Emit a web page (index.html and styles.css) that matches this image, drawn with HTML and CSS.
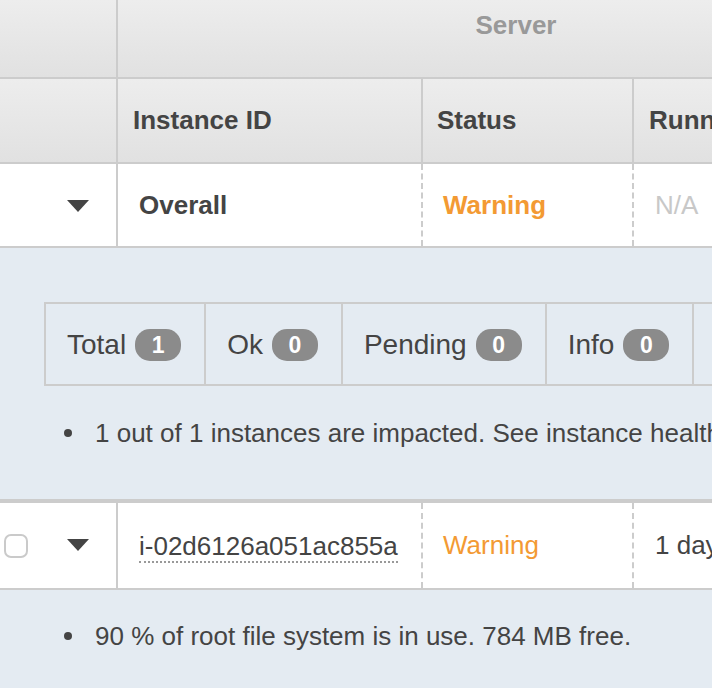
FILE: index.html
```html
<!DOCTYPE html>
<html>
<head>
<meta charset="utf-8">
<link rel="stylesheet" href="styles.css">
</head>
<body>
<div class="table">
  <div class="row head head-top">
    <div class="cell c0"></div>
    <div class="cell group">Server</div>
  </div>
  <div class="row head head-cols">
    <div class="cell c0"></div>
    <div class="cell c1 sep">Instance ID</div>
    <div class="cell c2 sep">Status</div>
    <div class="cell c3 sep">Running</div>
  </div>
  <div class="row body-row">
    <div class="cell c0 ctrl"><span class="caret"></span></div>
    <div class="cell c1 sep strong">Overall</div>
    <div class="cell c2 dash strong warn">Warning</div>
    <div class="cell c3 dash na">N/A</div>
  </div>
  <div class="detail detail-overall">
    <div class="summary">
      <div class="sum-cell">Total <span class="badge">1</span></div>
      <div class="sum-cell">Ok <span class="badge">0</span></div>
      <div class="sum-cell">Pending <span class="badge">0</span></div>
      <div class="sum-cell">Info <span class="badge">0</span></div>
      <div class="sum-cell">Warning <span class="badge">1</span></div>
    </div>
    <ul class="bullets">
      <li><span class="dot"></span><span class="nowrap">1 out of 1 instances are impacted. See instance health details below.</span></li>
    </ul>
  </div>
  <div class="row body-row instance">
    <div class="cell c0 ctrl"><span class="check"></span><span class="caret"></span></div>
    <div class="cell c1 sep"><span class="idlink">i-02d6126a051ac855a</span></div>
    <div class="cell c2 dash warn">Warning</div>
    <div class="cell c3 dash">1 day</div>
  </div>
  <div class="detail detail-instance">
    <ul class="bullets">
      <li><span class="dot"></span><span class="nowrap">90 % of root file system is in use. 784 MB free.</span></li>
    </ul>
  </div>
</div>
</body>
</html>
```

FILE: styles.css
```css
html, body {
  margin: 0;
  padding: 0;
  overflow: hidden;
  background: #e4ebf2;
}
body {
  width: 712px;
  height: 688px;
  font-family: "Liberation Sans", Arial, Helvetica, sans-serif;
  font-size: 26px;
  color: #444444;
}
.table {
  width: 712px;
  overflow: hidden;
}
.row {
  display: flex;
  flex-wrap: nowrap;
  width: 1200px;
  box-sizing: border-box;
}
.cell {
  flex: none;
  display: flex;
  align-items: center;
  box-sizing: border-box;
  white-space: nowrap;
}
.c0 { width: 116px; }
.c1 { width: 305px; }
.c2 { width: 211px; }
.c3 { width: 300px; }
.sep { border-left: 2px solid #cccccc; }
.dash { border-left: 2px dashed #cccccc; }

.head {
  background: linear-gradient(#ededed, #e1e1e1);
  border-bottom: 2px solid #cccccc;
  font-weight: bold;
}
.head-top { height: 79px; }
.head-top .group {
  width: 798px;
  border-left: 2px solid #cccccc;
  justify-content: center;
  align-items: flex-start;
  padding-top: 10px;
  color: #999999;
}
.head-cols { height: 85px; }
.head-cols .c1 { padding-left: 15px; }
.head-cols .c2 { padding-left: 14px; }
.head-cols .c3 { padding-left: 15px; }

.body-row {
  height: 84px;
  background: #ffffff;
  border-bottom: 2px solid #cccccc;
}
.body-row .c1 { padding-left: 21px; }
.body-row .c2 { padding-left: 20px; }
.body-row .c3 { padding-left: 21px; }
.strong { font-weight: bold; }
.warn { color: #f39a33; }
.na { color: #c8c8c8; }

.ctrl { position: relative; }
.caret {
  position: absolute;
  left: 67px;
  top: 36px;
  width: 0;
  height: 0;
  border-left: 11px solid transparent;
  border-right: 11px solid transparent;
  border-top: 12px solid #444444;
}
.check {
  position: absolute;
  left: 4px;
  top: 31px;
  width: 24px;
  height: 24px;
  box-sizing: border-box;
  border: 2px solid #cacaca;
  border-radius: 7px;
  background: #ffffff;
}
.instance {
  border-top: 4px solid #cccccc;
  height: 91px;
}
.idlink {
  border-bottom: 2px dotted #999999;
  line-height: 30px;
  padding-top: 2px;
}

.detail {
  background: #e4ebf2;
}
.detail-overall {
  height: 251px;
  box-sizing: border-box;
  padding-top: 54px;
}
.summary {
  display: flex;
  margin-left: 44px;
  width: 900px;
  height: 84px;
  box-sizing: border-box;
  border: 2px solid #cccccc;
  font-size: 28px;
}
.sum-cell {
  display: flex;
  align-items: center;
  gap: 9px;
  padding: 2px 23px 0 21px;
  border-right: 2px solid #cccccc;
  white-space: nowrap;
}
.badge {
  display: inline-flex;
  align-items: center;
  justify-content: center;
  min-width: 46px;
  height: 32px;
  padding: 0 6px;
  box-sizing: border-box;
  border-radius: 15px;
  background: #8b8b8b;
  color: #ffffff;
  font-weight: bold;
  font-size: 23px;
}
.bullets {
  list-style: none;
  margin: 0;
  padding: 0;
}
.bullets li {
  display: flex;
  align-items: center;
  height: 30px;
}
.detail-overall .bullets { margin-top: 32px; }
.detail-instance .bullets { padding-top: 31px; }
.dot {
  flex: none;
  width: 8px;
  height: 8px;
  border-radius: 50%;
  background: #444444;
  margin-left: 64px;
  margin-right: 23px;
}
.nowrap { white-space: nowrap; }
.detail-instance { height: 120px; }
```
